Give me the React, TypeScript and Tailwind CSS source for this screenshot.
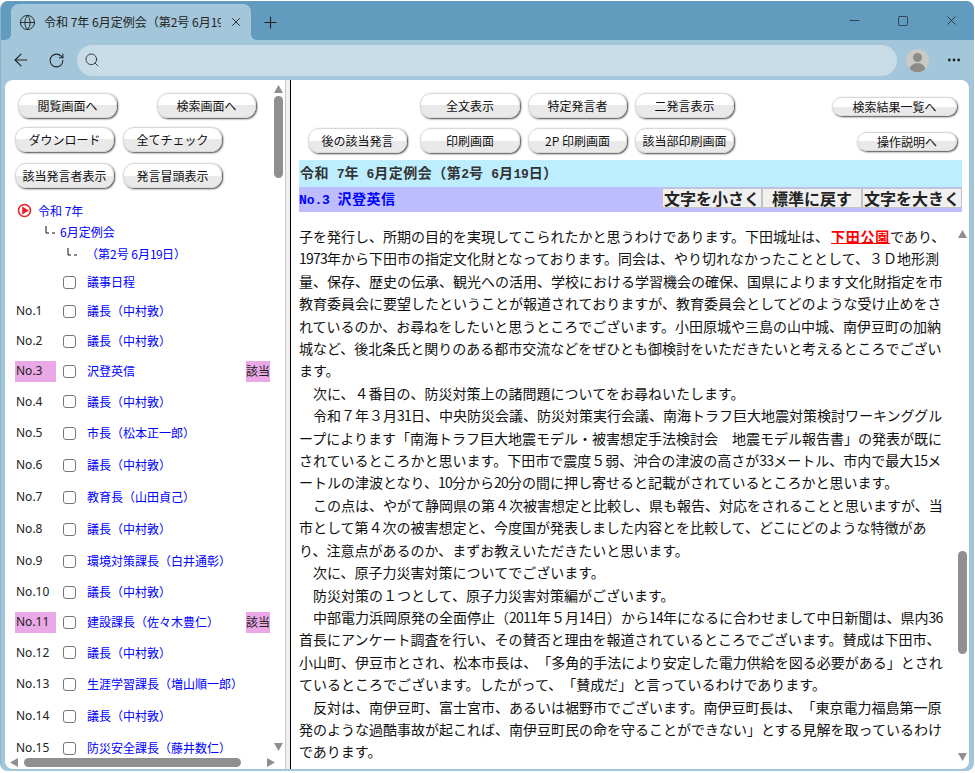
import { ArrowLeft, Globe, MoreHorizontal, Plus, RotateCw, Search, X, Minus, Square } from "lucide-react";

const jp = "font-['Noto_Sans_CJK_JP','Liberation_Sans',sans-serif] [text-spacing-trim:space-all]";

function Btn({ children, className = "" }: { children: React.ReactNode; className?: string }) {
  return (
    <div
      className={`flex items-center justify-center rounded-[11px] border border-[#d8d8d8] bg-[linear-gradient(#ffffff_50%,#e9e9e9_50%)] text-[12px] leading-none text-[#111] whitespace-nowrap shadow-[1px_1px_2px_#444] ${className}`}
    >
      {children}
    </div>
  );
}

const rows = [
  { no: "", name: "議事日程", h: "h-[28px]" },
  { no: "No.1", name: "議長(中村敦)", h: "h-[30px]" },
  { no: "No.2", name: "議長(中村敦)", h: "h-[30px]" },
  { no: "No.3", name: "沢登英信", h: "h-[30px]", hit: true },
  { no: "No.4", name: "議長(中村敦)", h: "h-[31px]" },
  { no: "No.5", name: "市長(松本正一郎)", h: "h-[32px]" },
  { no: "No.6", name: "議長(中村敦)", h: "h-[32px]" },
  { no: "No.7", name: "教育長(山田貞己)", h: "h-[32px]" },
  { no: "No.8", name: "議長(中村敦)", h: "h-[32px]" },
  { no: "No.9", name: "環境対策課長(白井通彰)", h: "h-[32px]" },
  { no: "No.10", name: "議長(中村敦)", h: "h-[30px]" },
  { no: "No.11", name: "建設課長(佐々木豊仁)", h: "h-[30px]", hit: true },
  { no: "No.12", name: "議長(中村敦)", h: "h-[31px]" },
  { no: "No.13", name: "生涯学習課長(増山順一郎)", h: "h-[32px]" },
  { no: "No.14", name: "議長(中村敦)", h: "h-[32px]" },
  { no: "No.15", name: "防災安全課長(藤井数仁)", h: "h-[32px]" },
];

const lines: React.ReactNode[] = [
  <>子を発行し、所期の目的を実現してこられたかと思うわけであります。下田城址は、<span className="font-bold text-[#ff0000] underline ml-[2px] tracking-[0.75px]">下田公園</span>であり、</>,
  "1973年から下田市の指定文化財となっております。同会は、やり切れなかったこととして、3D地形測",
  "量、保存、歴史の伝承、観光への活用、学校における学習機会の確保、国県によります文化財指定を市",
  "教育委員会に要望したということが報道されておりますが、教育委員会としてどのような受け止めをさ",
  "れているのか、お尋ねをしたいと思うところでございます。小田原城や三島の山中城、南伊豆町の加納",
  "城など、後北条氏と関りのある都市交流などをぜひとも御検討をいただきたいと考えるところでござい",
  "ます。",
  " 次に、4番目の、防災対策上の諸問題についてをお尋ねいたします。",
  " 令和7年3月31日、中央防災会議、防災対策実行会議、南海トラフ巨大地震対策検討ワーキンググル",
  "ープによります「南海トラフ巨大地震モデル・被害想定手法検討会 地震モデル報告書」の発表が既に",
  "されているところかと思います。下田市で震度5弱、沖合の津波の高さが33メートル、市内で最大15メ",
  "ートルの津波となり、10分から20分の間に押し寄せると記載がされているところかと思います。",
  " この点は、やがて静岡県の第4次被害想定と比較し、県も報告、対応をされることと思いますが、当",
  "市として第4次の被害想定と、今度国が発表しました内容とを比較して、どこにどのような特徴があ",
  "り、注意点があるのか、まずお教えいただきたいと思います。",
  " 次に、原子力災害対策についてでございます。",
  " 防災対策の1つとして、原子力災害対策編がございます。",
  " 中部電力浜岡原発の全面停止(2011年5月14日)から14年になるに合わせまして中日新聞は、県内36",
  "首長にアンケート調査を行い、その賛否と理由を報道されているところでございます。賛成は下田市、",
  "小山町、伊豆市とされ、松本市長は、「多角的手法により安定した電力供給を図る必要がある」とされ",
  "ているところでございます。したがって、「賛成だ」と言っているわけであります。",
  " 反対は、南伊豆町、富士宮市、あるいは裾野市でございます。南伊豆町長は、「東京電力福島第一原",
  "発のような過酷事故が起これば、南伊豆町民の命を守ることができない」とする見解を取っているわけ",
  "であります。",
];

const toFull = (s: string) =>
  s
    .replace(/ /g, "\u3000")
    .replace(/\(/g, "\uFF08")
    .replace(/\)/g, "\uFF09")
    .replace(/(^|[^0-9])3D/g, "$1\uFF13\uFF24")
    .replace(/(^|[^0-9])([1-9])(?=[番年月弱次つ])/g, (_, a, d) => a + String.fromCharCode(0xff10 + Number(d)))
    .replace(/(^|[^0-9])([1-9])(?=[番年月弱次つ])/g, (_, a, d) => a + String.fromCharCode(0xff10 + Number(d)));

/* Half-width digits, as the bitmap gothic of the page draws them */
const bodyLine = (s: string) =>
  toFull(s)
    .split(/([0-9]+)/)
    .map((part, i) =>
      /^[0-9]+$/.test(part) ? (
        <span key={i} className="tracking-[-0.77px]">{part}</span>
      ) : (
        part
      ),
    );

function Latin({ children }: { children: React.ReactNode }) {
  return <span className="font-['Liberation_Mono',monospace] text-[13px] tracking-[-0.1px]">{children}</span>;
}

function Tri({ d, className = "" }: { d: "up" | "down" | "left" | "right"; className?: string }) {
  const points = {
    up: "0,8 4.5,0 9,8",
    down: "0,0 9,0 4.5,8",
    left: "8,0 8,9 0,4.5",
    right: "0,0 0,9 8,4.5",
  }[d];
  return (
    <svg width="9" height="9" viewBox="0 0 9 9" className={`shrink-0 ${className}`}>
      <polygon points={points} fill="#8f8f8f" />
    </svg>
  );
}

export default function App() {
  return (
    <div className={`${jp} w-[975px] h-[773px] overflow-hidden bg-white`}>
      <div className="w-[974px] h-[770px] mt-[1px] rounded-[8px] overflow-hidden bg-[#a3c6da] flex flex-col border-l border-[#8fb5cc]">
        {/* Tab strip */}
        <div className="h-[39px] shrink-0 bg-[#619bbe] flex items-end pl-[4px]">
          <div className="w-[6px] h-[6px] shrink-0 bg-[#a3c6da]">
            <div className="w-full h-full rounded-br-[6px] bg-[#619bbe]" />
          </div>
          <div className="w-[240px] h-[36px] rounded-t-[8px] bg-[#a3c6da] flex items-center pl-[8px] pr-[8px] gap-[8px]">
            <Globe size={17} strokeWidth={1.3} className="text-[#222] shrink-0" />
            <span className="text-[12px] text-[#222] whitespace-nowrap overflow-hidden w-[182px]">
              令和 7年 6月定例会（第2号 6月<span className="tracking-[-0.5px]">19</span>日）
            </span>
            <X size={14} strokeWidth={1.6} className="text-[#222] shrink-0" />
          </div>
          <div className="w-[6px] h-[6px] shrink-0 bg-[#a3c6da]">
            <div className="w-full h-full rounded-bl-[6px] bg-[#619bbe]" />
          </div>
          <div className="h-[36px] flex items-center ml-[4px]">
            <Plus size={19} strokeWidth={1.4} className="text-[#222]" />
          </div>
          <div className="flex-1 h-[39px] flex items-center justify-end pr-[15px] gap-[35px] text-[#222]">
            <Minus size={15} strokeWidth={1.2} />
            <Square size={12} strokeWidth={1.4} />
            <X size={15} strokeWidth={1.2} />
          </div>
        </div>
        {/* Toolbar */}
        <div className="h-[40px] shrink-0 flex items-center pl-[10px]">
          <ArrowLeft size={20} strokeWidth={1.4} className="text-[#222]" />
          <RotateCw size={17} strokeWidth={1.5} className="text-[#222] ml-[17px]" />
          <div className="ml-[12px] w-[820px] h-[31px] rounded-full bg-[#c8dce8] flex items-center pl-[7px]">
            <Search size={16} strokeWidth={1.4} className="text-[#333]" />
          </div>
          <div className="ml-[9px] w-[23px] h-[23px] rounded-full bg-[#c9c9c6] overflow-hidden flex flex-col items-center">
            <div className="w-[9px] h-[9px] rounded-full bg-[#8f8b88] mt-[4px] shrink-0" />
            <div className="w-[17px] h-[10px] rounded-t-full bg-[#8f8b88] mt-[1px] shrink-0" />
          </div>
          <MoreHorizontal size={16} strokeWidth={2.2} className="text-[#222] ml-[17px]" />
        </div>
        {/* Page */}
        <div className="flex-1 min-h-0 ml-[4px] mr-[5px] mb-[2px] bg-white rounded-[8px] overflow-hidden flex">
          {/* Left frame */}
          <div className="w-[280px] shrink-0 flex flex-col">
            <div className="flex-1 min-h-0 flex">
              <div className="flex-1 min-w-0 overflow-hidden">
                <div className="h-[49px] pl-[13px] pt-[13px] flex gap-[40px]">
                  <Btn className="w-[99px] h-[25px]">閲覧画面へ</Btn>
                  <Btn className="w-[99px] h-[25px]">検索画面へ</Btn>
                </div>
                <div className="pl-[10px] flex gap-[9px] mt-[-2px]">
                  <Btn className="w-[99px] h-[25px]">ダウンロード</Btn>
                  <Btn className="w-[99px] h-[25px]">全てチェック</Btn>
                </div>
                <div className="pl-[10px] flex gap-[9px] mt-[11px]">
                  <Btn className="w-[99px] h-[25px]">該当発言者表示</Btn>
                  <Btn className="w-[99px] h-[25px]">発言冒頭表示</Btn>
                </div>
                <div className="mt-[12px] text-[12px] text-[#0000ff] leading-none">
                  <div className="h-[21px] flex items-center pl-[12px]">
                    <svg width="15" height="15" viewBox="0 0 15 15">
                      <circle cx="7.5" cy="7.5" r="6" fill="none" stroke="#e8202a" strokeWidth="1.6" />
                      <polygon points="5.2,3.5 12,7.5 5.2,11.5" fill="#e8202a" />
                    </svg>
                    <span className="ml-[6px]">令和 7年</span>
                  </div>
                  <div className="h-[22px] flex items-center pl-[40px]">
                    <svg width="14" height="12" viewBox="0 0 14 12">
                      <path d="M1 0 V7 H4 M7 7 H10" fill="none" stroke="#111" strokeWidth="1" />
                    </svg>
                    <span className="ml-[1px]">6月定例会</span>
                  </div>
                  <div className="h-[22px] flex items-center pl-[62px]">
                    <svg width="14" height="12" viewBox="0 0 14 12">
                      <path d="M1 0 V7 H4 M7 7 H10" fill="none" stroke="#111" strokeWidth="1" />
                    </svg>
                    <span className="ml-[5px]">（第2号 6月<span className="tracking-[-0.66px]">19</span>日）</span>
                  </div>
                </div>
                <div className="mt-[3px]">
                  {rows.map((r) => (
                    <div key={r.no || "top"} className={`${r.h} flex items-center pl-[10px] text-[12px] whitespace-nowrap`}>
                      <div className={`w-[41px] h-[21px] flex items-center pl-[1px] font-['Noto_Sans',sans-serif] text-[#222] ${r.hit ? "bg-[#eaa8e6]" : ""}`}>
                        {r.no}
                      </div>
                      <div className="ml-[7px] w-[13px] h-[13px] rounded-[3px] border border-[#767676] bg-white shrink-0" />
                      <div className="ml-[11px] w-[159px] text-[#0000ff]">{toFull(r.name)}</div>
                      {r.hit && (
                        <div className="w-[24px] h-[21px] bg-[#eaa8e6] flex items-center justify-center text-[#222] shrink-0">該当</div>
                      )}
                    </div>
                  ))}
                </div>
              </div>
              {/* vertical scrollbar */}
              <div className="w-[14px] shrink-0 flex flex-col items-center pt-[5px] pb-[3px]">
                <Tri d="up" />
                <div className="w-[9px] h-[82px] rounded-full bg-[#8f8f8f] mt-[2px]" />
                <div className="flex-1" />
                <Tri d="down" />
              </div>
            </div>
            <div className="h-[14px] shrink-0 flex items-center pl-[5px] pr-[5px]">
              <Tri d="left" />
              <div className="ml-[5px] w-[217px] h-[9px] rounded-full bg-[#8f8f8f]" />
              <div className="flex-1" />
              <Tri d="right" className="mr-[4px]" />
            </div>
          </div>
          {/* Divider */}
          <div className="w-[5px] shrink-0 bg-[#f0f0f0] border-l border-[#c8c8c8]" />
          <div className="w-[1px] shrink-0 bg-black" />
          {/* Right frame */}
          <div className="flex-1 min-w-0 flex flex-col pl-[8px]">
            <div className="h-[48px] pt-[13px] flex pr-[12px]">
              <div className="ml-[121px] flex gap-[8px]">
                <Btn className="w-[100px] h-[25px]">全文表示</Btn>
                <Btn className="w-[99px] h-[25px]">特定発言者</Btn>
                <Btn className="w-[99px] h-[25px]">二発言表示</Btn>
              </div>
              <div className="flex-1" />
              <Btn className="w-[125px] h-[19px] mt-[4px]">検索結果一覧へ</Btn>
            </div>
            <div className="h-[32px] flex pr-[12px]">
              <div className="ml-[9px] flex gap-[13px]">
                <Btn className="w-[99px] h-[25px]">後の該当発言</Btn>
              </div>
              <div className="ml-[13px] flex gap-[8px]">
                <Btn className="w-[100px] h-[25px]">印刷画面</Btn>
                <Btn className="w-[99px] h-[25px]">2P 印刷画面</Btn>
                <Btn className="w-[99px] h-[25px]">該当部印刷画面</Btn>
              </div>
              <div className="flex-1" />
              <Btn className="w-[100px] h-[19px] mt-[4px]">操作説明へ</Btn>
            </div>
            <div className="w-[663px] h-[27px] bg-[#bdeeff] flex items-center pl-[1px] text-[14px] font-bold tracking-[0.5px] text-[#333] whitespace-pre">
              <span>令和<Latin> 7</Latin>年<Latin> 6</Latin>月定例会（第<Latin>2</Latin>号<Latin> 6</Latin>月<Latin>19</Latin>日）</span>
            </div>
            <div className="w-[663px] h-[25px] bg-[#bdbdff] flex items-start justify-between text-[14px] font-bold tracking-[0.5px] text-[#0000ff] whitespace-pre">
              <span className="leading-[23px]"><Latin>No.3 </Latin>沢登英信</span>
              <div className="flex mt-[1px] tracking-normal">
                {["文字を小さく", "標準に戻す", "文字を大きく"].map((t) => (
                  <div key={t} className="w-[100px] h-[20px] bg-[#f0f0f0] border border-[#c4c4c4] flex items-center justify-center text-[16px] leading-none text-[#222] font-bold">
                    {t}
                  </div>
                ))}
              </div>
            </div>
            <div className="flex-1 min-h-0 flex">
              <div className="flex-1 min-w-0 overflow-hidden pt-[13px] text-[14px] leading-[22.4px] text-[#111] whitespace-pre">
                {lines.map((l, i) => (
                  <div key={i}>{typeof l === "string" ? bodyLine(l) : l}</div>
                ))}
              </div>
              <div className="w-[12px] mr-[1px] shrink-0 flex flex-col items-center pt-[18px] pb-[7px]">
                <Tri d="up" />
                <div className="h-[312px] shrink-0" />
                <div className="w-[9px] h-[103px] rounded-full bg-[#8f8f8f] shrink-0" />
                <div className="flex-1" />
                <Tri d="down" />
              </div>
            </div>
          </div>
        </div>
      </div>
    </div>
  );
}
